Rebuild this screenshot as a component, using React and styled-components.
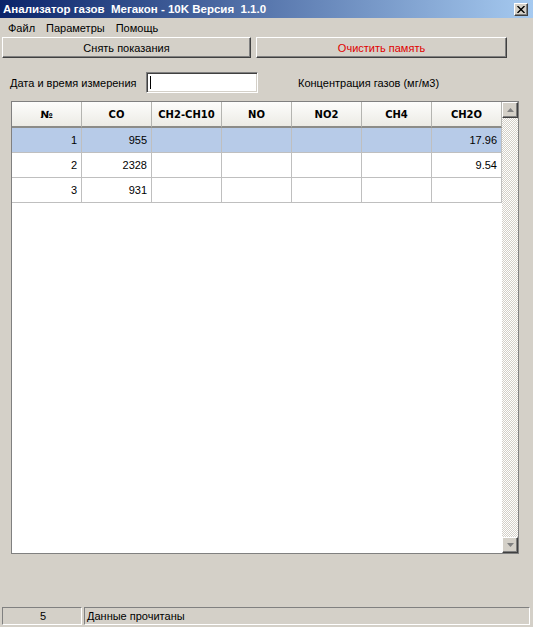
import React from "react";
import styled, { createGlobalStyle, css } from "styled-components";

const GlobalStyle = createGlobalStyle`
  html, body {
    margin: 0;
    padding: 0;
    background: #d4d0c8;
  }
  * {
    box-sizing: border-box;
  }
`;

const raised = css`
  border-top: 1px solid #ffffff;
  border-left: 1px solid #ffffff;
  border-right: 1px solid #404040;
  border-bottom: 1px solid #404040;
  box-shadow: inset -1px -1px 0 #808080;
`;

const sunken = css`
  border-top: 1px solid #808080;
  border-left: 1px solid #808080;
  border-right: 1px solid #ffffff;
  border-bottom: 1px solid #ffffff;
`;

const Window = styled.div`
  width: 533px;
  height: 627px;
  background: #d4d0c8;
  display: flex;
  flex-direction: column;
  font-family: "Liberation Sans", Arial, sans-serif;
  font-size: 11px;
  color: #000;
  overflow: hidden;
`;

const TitleBar = styled.div`
  height: 18px;
  display: flex;
  align-items: center;
  justify-content: space-between;
  padding: 0 5px 0 3px;
  background: linear-gradient(to right, #0a246a, #a6caf0);
  color: #fff;
  font-weight: bold;
  font-size: 11.5px;
`;

const CloseButton = styled.div`
  width: 14px;
  height: 13px;
  background: #d4d0c8;
  ${raised};
  display: flex;
  align-items: center;
  justify-content: center;
`;

const MenuBar = styled.div`
  height: 19px;
  display: flex;
  align-items: center;
  gap: 11px;
  padding-left: 8px;
`;

const MenuItem = styled.span``;

const ButtonRow = styled.div`
  display: flex;
  gap: 5px;
  padding-left: 2px;
`;

const ActionButton = styled.div`
  width: ${(p) => p.$w}px;
  height: 21px;
  background: #d4d0c8;
  ${raised};
  display: flex;
  align-items: center;
  justify-content: center;
  color: ${(p) => (p.$danger ? "#e00000" : "#000")};
`;

const FormRow = styled.div`
  display: flex;
  align-items: center;
  margin-top: 14px;
  padding-left: 10px;
  height: 21px;
`;

const Label = styled.span`
  width: 136px;
`;

const DateInput = styled.div`
  width: 112px;
  height: 21px;
  background: #fff;
  border-top: 1px solid #808080;
  border-left: 1px solid #808080;
  border-right: 1px solid #ffffff;
  border-bottom: 1px solid #ffffff;
  box-shadow: inset 1px 1px 0 #404040, inset -1px -1px 0 #d4d0c8;
  padding: 3px 0 0 3px;
`;

const Caret = styled.div`
  width: 1px;
  height: 13px;
  background: #000;
`;

const Hint = styled.span`
  margin-left: 40px;
`;

const Grid = styled.div`
  margin: 8px 0 0 11px;
  width: 508px;
  height: 453px;
  border: 1px solid #808080;
  background: #fff;
  display: flex;
`;

const Table = styled.div`
  width: 490px;
  display: flex;
  flex-direction: column;
`;

const Row = styled.div`
  display: grid;
  grid-template-columns: repeat(7, 70px);
  height: ${(p) => (p.$head ? 26 : 25)}px;
  background: ${(p) => (p.$selected ? "#b7cbe8" : "transparent")};
`;

const HeadCell = styled.div`
  display: flex;
  align-items: center;
  justify-content: center;
  font-family: "DejaVu Sans", Verdana, sans-serif;
  font-weight: bold;
  font-size: 10px;
  background: linear-gradient(#fdfdfc, #ecebe5);
  border-right: 1px solid #b4b4b0;
  border-bottom: 2px solid #8c8c88;
`;

const Cell = styled.div`
  display: flex;
  align-items: center;
  justify-content: flex-end;
  padding-right: 4px;
  border-right: 1px solid #bfbfbf;
  border-bottom: 1px solid #bfbfbf;
`;

const ScrollBar = styled.div`
  width: 16px;
  display: flex;
  flex-direction: column;
  background-color: #fff;
  background-image: conic-gradient(
    #d4d0c8 25%,
    #fff 0 50%,
    #d4d0c8 0 75%,
    #fff 0
  );
  background-size: 2px 2px;
`;

const ScrollTrack = styled.div`
  flex: 1;
`;

const ArrowButton = styled.div`
  width: 16px;
  height: 16px;
  background: #d4d0c8;
  ${raised};
  display: flex;
  align-items: center;
  justify-content: center;
`;

const Spacer = styled.div`
  flex: 1;
`;

const StatusBar = styled.div`
  height: 20px;
  display: flex;
  gap: 2px;
  padding: 0 3px 2px 2px;
`;

const StatusPanel = styled.div`
  ${sunken};
  width: ${(p) => (p.$w ? `${p.$w}px` : "auto")};
  flex: ${(p) => (p.$w ? "none" : 1)};
  display: flex;
  align-items: center;
  justify-content: ${(p) => (p.$center ? "center" : "flex-start")};
  padding-left: 2px;
`;

const Arrow = ({ up }) => (
  <svg width="7" height="4" viewBox="0 0 7 4">
    <path d={up ? "M3.5 0 L7 4 L0 4 Z" : "M0 0 L7 0 L3.5 4 Z"} fill="#808080" />
  </svg>
);

const columns = ["№", "CO", "CH2-CH10", "NO", "NO2", "CH4", "CH2O"];

const rows = [
  ["1", "955", "", "", "", "", "17.96"],
  ["2", "2328", "", "", "", "", "9.54"],
  ["3", "931", "", "", "", "", ""],
];

export default function App() {
  return (
    <>
      <GlobalStyle />
      <Window>
        <TitleBar>
          <span>Анализатор газов&nbsp; Мегакон - 10K Версия&nbsp; 1.1.0</span>
          <CloseButton>
            <svg width="8" height="7" viewBox="0 0 8 7">
              <path d="M0.5 0 L7.5 7 M7.5 0 L0.5 7" stroke="#000" strokeWidth="1.4" />
            </svg>
          </CloseButton>
        </TitleBar>
        <MenuBar>
          <MenuItem>Файл</MenuItem>
          <MenuItem>Параметры</MenuItem>
          <MenuItem>Помощь</MenuItem>
        </MenuBar>
        <ButtonRow>
          <ActionButton $w={249}>Снять показания</ActionButton>
          <ActionButton $w={251} $danger>
            Очистить память
          </ActionButton>
        </ButtonRow>
        <FormRow>
          <Label>Дата и время измерения</Label>
          <DateInput>
            <Caret />
          </DateInput>
          <Hint>Концентрация газов (мг/м3)</Hint>
        </FormRow>
        <Grid>
          <Table>
            <Row $head>
              {columns.map((c) => (
                <HeadCell key={c}>{c}</HeadCell>
              ))}
            </Row>
            {rows.map((r, i) => (
              <Row key={i} $selected={i === 0}>
                {r.map((v, j) => (
                  <Cell key={j}>{v}</Cell>
                ))}
              </Row>
            ))}
          </Table>
          <ScrollBar>
            <ArrowButton>
              <Arrow up />
            </ArrowButton>
            <ScrollTrack />
            <ArrowButton>
              <Arrow />
            </ArrowButton>
          </ScrollBar>
        </Grid>
        <Spacer />
        <StatusBar>
          <StatusPanel $w={80} $center>
            5
          </StatusPanel>
          <StatusPanel>Данные прочитаны</StatusPanel>
        </StatusBar>
      </Window>
    </>
  );
}
